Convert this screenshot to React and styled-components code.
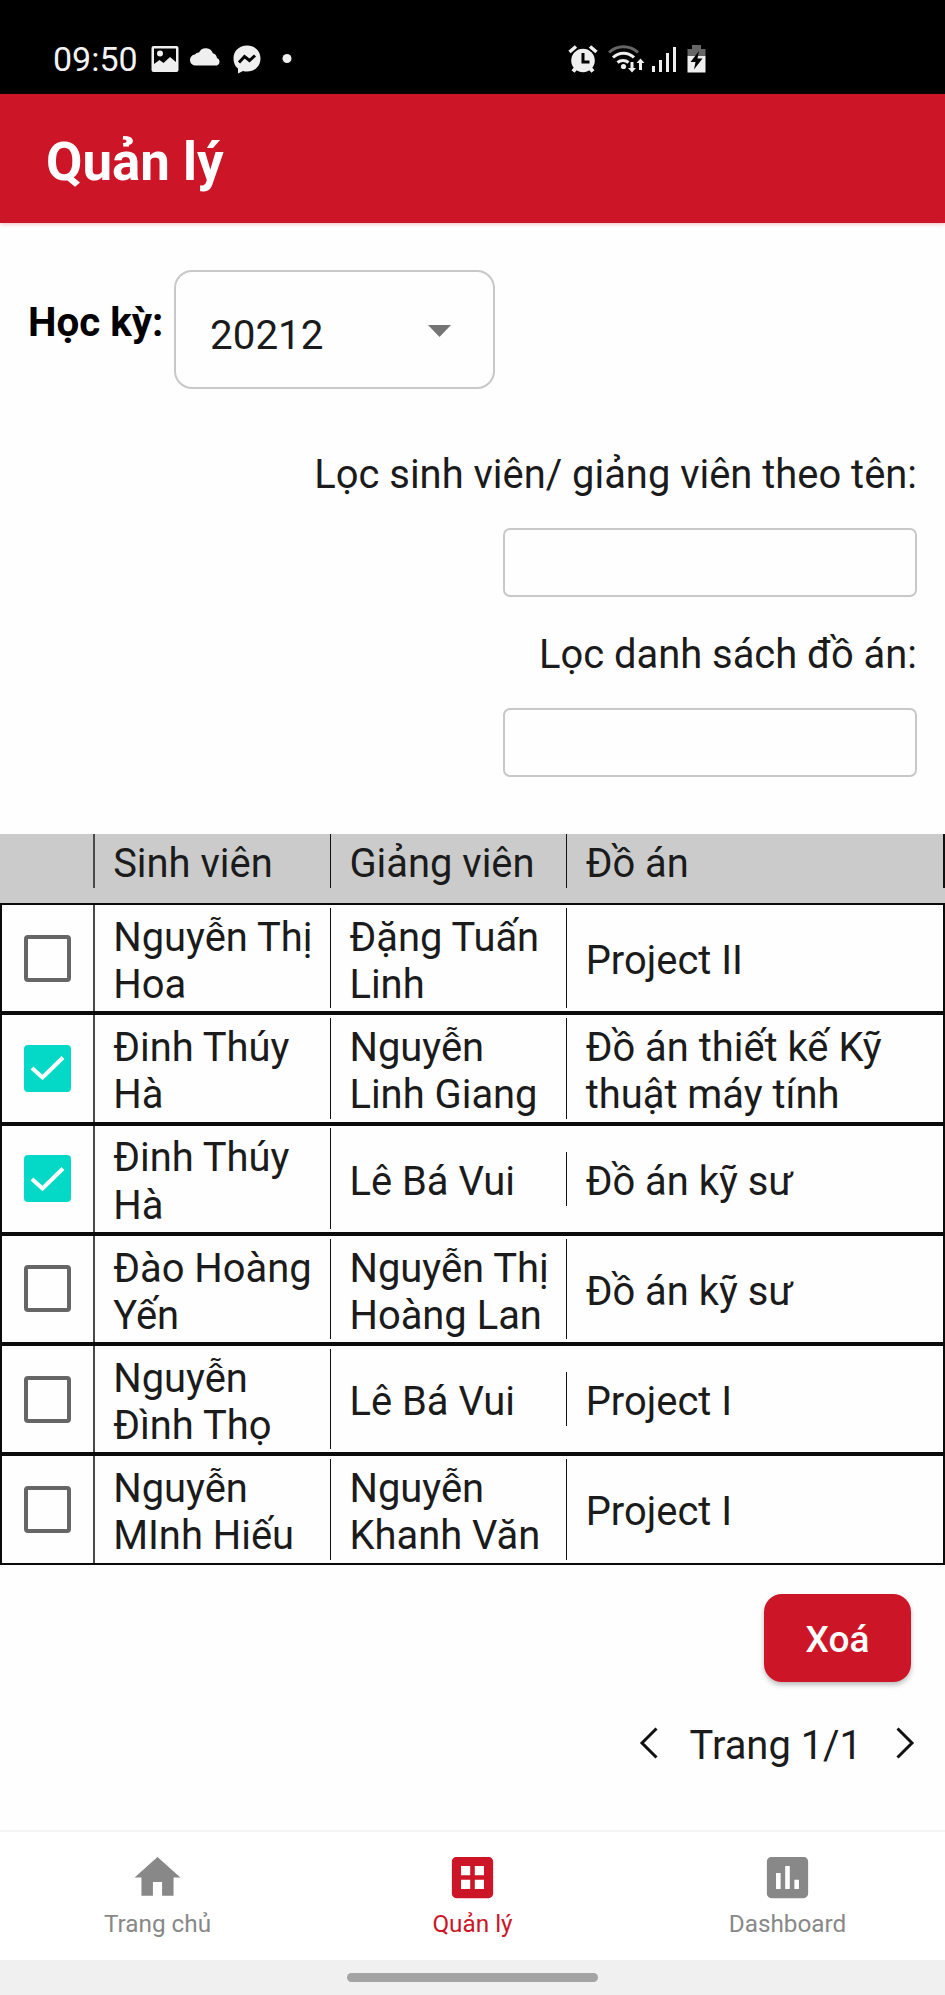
import React, { useState } from "react";
import styled, { createGlobalStyle } from "styled-components";

const RED = "#cc1628";
const INK = "#1b1b1c";

const GlobalStyle = createGlobalStyle`
  *, *::before, *::after { box-sizing: border-box; }
  body { margin: 0; background: #fefefe; font-family: Roboto, "Noto Sans", sans-serif; }
`;

const Screen = styled.div`
  display: flex;
  flex-direction: column;
  width: 945px;
  height: 1995px;
  overflow: hidden;
  background: #fefefe;
  color: ${INK};
  font-size: 39.9px;
  line-height: 47.3px;
`;

const StatusBar = styled.div`
  display: flex;
  flex: none;
  height: 94px;
  padding: 24px 239px 0 53px;
  justify-content: space-between;
  align-items: center;
  background: #000;
  color: #f2f2f2;
`;

const StatusGroup = styled.div`
  display: flex;
  align-items: center;
  height: 70px;
`;

const Clock = styled.span`
  width: 98px;
  font-size: 34px;
  line-height: 40px;
  white-space: nowrap;
`;

const StatusIcon = styled.svg`
  display: block;
  flex: none;
  width: ${(p) => p.$w}px;
  height: 30px;
  margin-right: ${(p) => p.$gap || 0}px;
  fill: #efefef;
`;

const AppHeader = styled.header`
  display: flex;
  flex: none;
  align-items: center;
  height: 129px;
  padding: 7px 46px 0;
  background: ${RED};
  box-shadow: 0 1px 4px rgba(204, 22, 40, 0.3);
`;

const Title = styled.h1`
  margin: 0;
  color: #fff;
  font-size: 52.8px;
  line-height: 62px;
  font-weight: 700;
`;

const Content = styled.main`
  display: flex;
  flex: 1;
  flex-direction: column;
`;

const SemesterRow = styled.div`
  display: flex;
  align-items: center;
  height: 119px;
  margin-top: 47px;
  padding-left: 28px;
`;

const SemesterLabel = styled.label`
  width: 146px;
  margin-top: -14px;
  font-size: 40.3px;
  font-weight: 700;
  color: #000;
  white-space: nowrap;
`;

const Select = styled.button`
  display: flex;
  align-items: center;
  justify-content: space-between;
  width: 321px;
  height: 119px;
  padding: 13px 42px 0 34px;
  border: 2px solid #c8c8c8;
  border-radius: 18px;
  background: transparent;
  color: ${INK};
  font: inherit;
  font-size: 40.4px;
`;

const Caret = styled.svg`
  width: 23px;
  height: 12px;
  margin-top: -10px;
  fill: #757575;
`;

const Filters = styled.section`
  display: flex;
  flex-direction: column;
  align-items: flex-end;
  margin-top: 62px;
  padding-right: 28px;
`;

const FilterLabel = styled.label`
  height: 77px;
  white-space: nowrap;
`;

const FilterInput = styled.input`
  width: 414px;
  height: 69px;
  margin-bottom: 34px;
  padding: 0 16px;
  border: 2px solid #c8c8c8;
  border-radius: 7px;
  background: transparent;
  font: inherit;
`;

const Grid = styled.div`
  margin-top: 23px;
`;

const HeadRow = styled.div`
  display: grid;
  grid-template-columns: 94.5px 236.25px 236.25px 1fr;
  align-items: start;
  height: 69px;
  background: #cbcbcb;
`;

const Row = styled.div`
  display: grid;
  grid-template-columns: 92.5px 236.25px 236.25px 1fr;
  align-items: center;
  height: 110.25px;
  border: 2px solid #0b0b0b;
`;

const Cell = styled.div`
  min-height: 54px;
  padding: 6px 4px 0 18.7px;
  border-right: ${(p) => p.$edge ?? 1}px solid #111;
`;

const CheckCell = styled.div`
  display: flex;
  align-items: center;
  align-self: ${(p) => (p.$head ? "start" : "stretch")};
  min-height: 54px;
  padding-left: 22px;
  border-right: 2px solid #4a4a4a;
`;

const CheckBox = styled.button`
  display: flex;
  align-items: center;
  justify-content: center;
  width: 47px;
  height: 47px;
  padding: 0;
  border: ${(p) => (p.$on ? "0" : "4px solid #666")};
  border-radius: 4px;
  background: ${(p) => (p.$on ? "#03d9c6" : "transparent")};
`;

const Actions = styled.div`
  display: flex;
  justify-content: flex-end;
  margin-top: 29.5px;
  padding-right: 34px;
`;

const DeleteButton = styled.button`
  width: 147px;
  height: 88px;
  padding: 4px 0 0;
  border: 0;
  border-radius: 18px;
  background: ${RED};
  box-shadow: 0 3px 5px rgba(0, 0, 0, 0.26);
  color: #fff;
  font: 500 37px/44px Roboto, sans-serif;
`;

const Pager = styled.nav`
  display: flex;
  align-items: center;
  justify-content: flex-end;
  height: 48px;
  margin-top: 37px;
  padding-right: 30px;
`;

const PageText = styled.span`
  margin: 0 34px 0 32px;
  padding-top: 5px;
`;

const Chevron = styled.svg`
  width: 19px;
  height: 32px;
  fill: none;
  stroke: #111;
  stroke-width: 3;
`;

const TabBar = styled.nav`
  display: grid;
  flex: none;
  grid-template-columns: repeat(3, 1fr);
  height: 130px;
  border-top: 2px solid #f4f4f4;
  background: #fff;
`;

const Tab = styled.a`
  display: flex;
  flex-direction: column;
  align-items: center;
  padding-top: 18px;
  color: ${(p) => (p.$active ? RED : "#888")};
  font-size: 24.3px;
  line-height: 30px;
  svg { display: block; width: 55px; height: 55px; margin-bottom: 4px; fill: currentColor; }
`;

const GestureBar = styled.div`
  display: flex;
  flex: none;
  height: 35px;
  justify-content: center;
  padding-top: 13px;
  background: #f0f0f0;
`;

const Handle = styled.div`
  width: 251px;
  height: 9px;
  border-radius: 5px;
  background: #a4a4a4;
`;

const rows = [
  ["Nguyễn Thị Hoa", "Đặng Tuấn Linh", "Project II", false],
  ["Đinh Thúy Hà", "Nguyễn Linh Giang", "Đồ án thiết kế Kỹ thuật máy tính", true],
  ["Đinh Thúy Hà", "Lê Bá Vui", "Đồ án kỹ sư", true],
  ["Đào Hoàng Yến", "Nguyễn Thị Hoàng Lan", "Đồ án kỹ sư", false],
  ["Nguyễn Đình Thọ", "Lê Bá Vui", "Project I", false],
  ["Nguyễn MInh Hiếu", "Nguyễn Khanh Văn", "Project I", false],
];

const tabs = [
  ["Trang chủ", "M10 20v-6h4v6h5v-8h3L12 3 2 12h3v8z"],
  ["Quản lý", "M19 3H5c-1.1 0-2 .9-2 2v14c0 1.1.9 2 2 2h14c1.1 0 2-.9 2-2V5c0-1.1-.9-2-2-2zM11 17H7v-4h4v4zm0-6H7V7h4v4zm6 6h-4v-4h4v4zm0-6h-4V7h4v4z"],
  ["Dashboard", "M19 3H5c-1.1 0-2 .9-2 2v14c0 1.1.9 2 2 2h14c1.1 0 2-.9 2-2V5c0-1.1-.9-2-2-2zM9 17H7v-7h2v7zm4 0h-2V7h2v10zm4 0h-2v-4h2v4z"],
];

function StatusIcons() {
  return (
    <StatusGroup>
      <StatusIcon $w={30} $gap={10} viewBox="0 0 30 30">
        <path d="M8.5 23.5 5 27.5M21.5 23.5l3.5 4" stroke="#efefef" strokeWidth="4" />
        <path d="M1.5 8 8 2.5M28.5 8 22 2.5" stroke="#efefef" strokeWidth="3.6" />
        <circle cx="15" cy="16.5" r="11.8" />
        <path d="M15 9v9h6.5" fill="none" stroke="#000" strokeWidth="3" />
      </StatusIcon>
      <StatusIcon $w={38} $gap={5} viewBox="0 0 38 30">
        <g fill="none" strokeWidth="3">
          <path d="M1 8.5a21 21 0 0 1 29 0" stroke="#666" />
          <path d="M5 13.5a15 15 0 0 1 21 0M9.5 18.5a8.5 8.5 0 0 1 11 0" stroke="#efefef" />
        </g>
        <circle cx="15.5" cy="22.5" r="2.6" />
        <path d="M22.5 18h3v6H28l-4 4.500-4-4.500h2.500zM31 26h3v-7h2.500l-4-4.500-4 4.500H31z" />
      </StatusIcon>
      <StatusIcon $w={26} $gap={10} viewBox="0 0 26 30">
        <path d="M1 22h3v6H1zM8 16h3v12H8zM15 9h3v19h-3zM22 3h3v25h-3z" />
      </StatusIcon>
      <StatusIcon $w={19} viewBox="0 0 19 30">
        <path d="M5 1h9v4h4.500v7H.5V5H5z" fill="#666" />
        <path d="M.5 12h18v16.500H.5z" />
        <path d="M12 7 3.500 18h5L7 25.500 15.500 14.500h-5z" fill="#000" />
      </StatusIcon>
    </StatusGroup>
  );
}

export default function App() {
  const [checked, setChecked] = useState(rows.map((r) => r[3]));
  const toggle = (i) => setChecked(checked.map((c, k) => (k === i ? !c : c)));

  return (
    <>
      <GlobalStyle />
      <Screen>
        <StatusBar>
          <StatusGroup>
            <Clock>09:50</Clock>
            <StatusIcon $w={28} $gap={11} viewBox="0 0 28 30">
              <path fillRule="evenodd" d="M2.500 2h23A2 2 0 0 1 27.500 4v22a2 2 0 0 1-2 2h-23a2 2 0 0 1-2-2V4a2 2 0 0 1 2-2zM3 4.500V20l5.500-4 4 3 6.500-6 6 5V4.500z" />
              <circle cx="9" cy="9.5" r="3" />
            </StatusIcon>
            <StatusIcon $w={31} $gap={11} viewBox="0 0 31 30">
              <path d="M6 21.500a5.500 5.500 0 0 1-1-11q1-2 4-2a7.500 7.500 0 0 1 14 1q3 0 4 4.500a4 4 0 0 1 0 7.500z" />
            </StatusIcon>
            <StatusIcon $w={30} $gap={20} viewBox="0 0 30 30">
              <path d="M15 1.500c8 0 13.500 5.500 13.500 13S23 27.500 15 27.500q-2 0-4-.5l-5 2.500v-5C3 22.500 1.500 18.500 1.500 14.500c0-7.500 5.500-13 13.500-13z" />
              <path d="m7 18.500 5.500-6 5 4 5.500-5" fill="none" stroke="#000" strokeWidth="3" />
            </StatusIcon>
            <StatusIcon $w={10} viewBox="0 0 10 30"><circle cx="5" cy="14.500" r="4.500" /></StatusIcon>
          </StatusGroup>
          <StatusIcons />
        </StatusBar>
        <AppHeader><Title>Quản lý</Title></AppHeader>
        <Content>
          <SemesterRow>
            <SemesterLabel>Học kỳ:</SemesterLabel>
            <Select>
              20212
              <Caret viewBox="0 0 23 12"><path d="M0 0h23L11.500 12z" /></Caret>
            </Select>
          </SemesterRow>
          <Filters>
            <FilterLabel htmlFor="people">Lọc sinh viên/ giảng viên theo tên:</FilterLabel>
            <FilterInput id="people" />
            <FilterLabel htmlFor="projects">Lọc danh sách đồ án:</FilterLabel>
            <FilterInput id="projects" />
          </Filters>
          <Grid>
            <HeadRow>
              <CheckCell $head />
              <Cell>Sinh viên</Cell>
              <Cell>Giảng viên</Cell>
              <Cell $edge={2}>Đồ án</Cell>
            </HeadRow>
            {rows.map(([student, teacher, project], i) => (
              <Row key={i}>
                <CheckCell>
                  <CheckBox $on={checked[i]} onClick={() => toggle(i)}>
                    {checked[i] && (
                      <svg width="35" height="26" viewBox="0 0 35 26" fill="none" stroke="#fff" strokeWidth="4">
                        <path d="m2 13 10.500 9.500L33 2.500" />
                      </svg>
                    )}
                  </CheckBox>
                </CheckCell>
                <Cell>{student}</Cell>
                <Cell>{teacher}</Cell>
                <Cell $edge={0}>{project}</Cell>
              </Row>
            ))}
          </Grid>
          <Actions><DeleteButton>Xoá</DeleteButton></Actions>
          <Pager>
            <Chevron viewBox="0 0 19 32"><path d="M17.500 1.500 3 16l14.500 14.500" /></Chevron>
            <PageText>Trang 1/1</PageText>
            <Chevron viewBox="0 0 19 32"><path d="M1.500 1.500 16 16 1.500 30.500" /></Chevron>
          </Pager>
        </Content>
        <TabBar>
          {tabs.map(([name, d], i) => (
            <Tab key={name} $active={i === 1}>
              <svg viewBox="0 0 24 24"><path d={d} /></svg>
              {name}
            </Tab>
          ))}
        </TabBar>
        <GestureBar><Handle /></GestureBar>
      </Screen>
    </>
  );
}
